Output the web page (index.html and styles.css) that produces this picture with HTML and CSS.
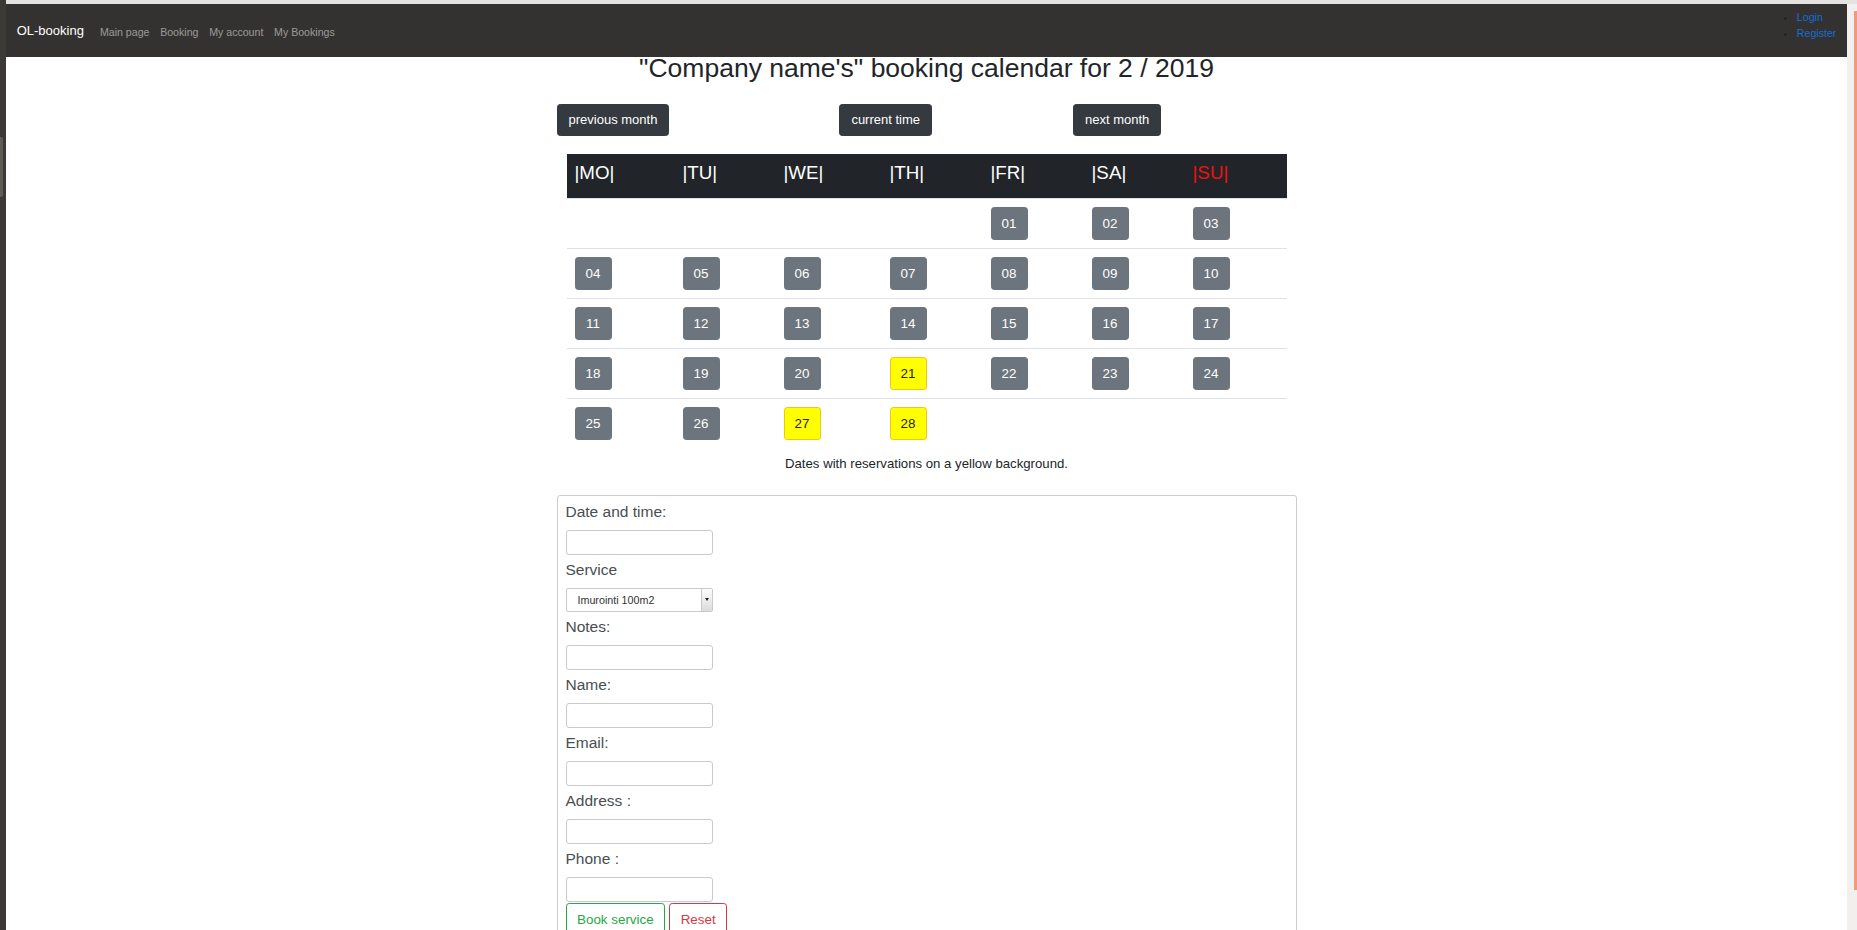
FILE: index.html
```html
<!DOCTYPE html>
<html lang="en">
<head>
<meta charset="utf-8">
<title>OL-booking</title>
<link rel="stylesheet" href="styles.css">
</head>
<body>
<div class="screen">
  <div class="dock"><div class="dock-tab"></div></div>
  <div class="window">
    <div class="topbar"></div>
    <div class="win-body">
      <div class="page">
        <nav class="navbar">
          <a class="brand" href="#">OL-booking</a>
          <ul class="nav-links">
            <li><a class="nav-link" href="#">Main page</a></li>
            <li><a class="nav-link" href="#">Booking</a></li>
            <li><a class="nav-link" href="#">My account</a></li>
            <li><a class="nav-link" href="#">My Bookings</a></li>
          </ul>
          <ul class="auth">
            <li><a href="#">Login</a></li>
            <li><a href="#">Register</a></li>
          </ul>
        </nav>
        <main class="container">
          <h1 class="title">"Company name's" booking calendar for 2 / 2019</h1>
          <div class="month-nav">
            <button class="btn-dark">previous month</button>
            <button class="btn-dark btn-current">current time</button>
            <button class="btn-dark btn-next">next month</button>
          </div>
          <table class="calendar">
            <colgroup>
              <col class="col-wide">
              <col class="col-narrow">
              <col class="col-mid">
              <col class="col-narrow">
              <col class="col-narrow">
              <col class="col-narrow">
              <col class="col-last">
            </colgroup>
            <thead>
              <tr>
                <th><span class="day-name">|MO|</span></th>
                <th><span class="day-name">|TU|</span></th>
                <th><span class="day-name">|WE|</span></th>
                <th><span class="day-name">|TH|</span></th>
                <th><span class="day-name">|FR|</span></th>
                <th><span class="day-name">|SA|</span></th>
                <th><span class="day-name sun">|SU|</span></th>
              </tr>
            </thead>
            <tbody>
              <tr>
                <td></td><td></td><td></td><td></td>
                <td><button class="day">01</button></td>
                <td><button class="day">02</button></td>
                <td><button class="day">03</button></td>
              </tr>
              <tr>
                <td><button class="day">04</button></td>
                <td><button class="day">05</button></td>
                <td><button class="day">06</button></td>
                <td><button class="day">07</button></td>
                <td><button class="day">08</button></td>
                <td><button class="day">09</button></td>
                <td><button class="day">10</button></td>
              </tr>
              <tr>
                <td><button class="day">11</button></td>
                <td><button class="day">12</button></td>
                <td><button class="day">13</button></td>
                <td><button class="day">14</button></td>
                <td><button class="day">15</button></td>
                <td><button class="day">16</button></td>
                <td><button class="day">17</button></td>
              </tr>
              <tr>
                <td><button class="day">18</button></td>
                <td><button class="day">19</button></td>
                <td><button class="day">20</button></td>
                <td><button class="day booked">21</button></td>
                <td><button class="day">22</button></td>
                <td><button class="day">23</button></td>
                <td><button class="day">24</button></td>
              </tr>
              <tr>
                <td><button class="day">25</button></td>
                <td><button class="day">26</button></td>
                <td><button class="day booked">27</button></td>
                <td><button class="day booked">28</button></td>
                <td></td><td></td><td></td>
              </tr>
            </tbody>
          </table>
          <p class="legend">Dates with reservations on a yellow background.</p>
          <form class="booking">
            <label class="field-label">Date and time:</label>
            <input class="field" type="text">
            <label class="field-label">Service</label>
            <div class="select-box">
              <select class="select"><option>Imurointi 100m2</option></select>
              <span class="select-arrow"></span>
            </div>
            <label class="field-label">Notes:</label>
            <input class="field" type="text">
            <label class="field-label">Name:</label>
            <input class="field" type="text">
            <label class="field-label">Email:</label>
            <input class="field" type="text">
            <label class="field-label">Address :</label>
            <input class="field" type="text">
            <label class="field-label">Phone :</label>
            <input class="field" type="text">
            <div class="actions">
              <button type="button" class="btn-outline btn-success-o">Book service</button>
              <button type="reset" class="btn-outline btn-danger-o">Reset</button>
            </div>
          </form>
        </main>
      </div>
      <div class="scrollbar"><div class="thumb"></div></div>
    </div>
  </div>
</div>
</body>
</html>
```

FILE: styles.css
```css
* { box-sizing: border-box; }
html, body { margin: 0; padding: 0; }
body {
  font-family: "Liberation Sans", Arial, sans-serif;
  color: #212529;
  background: #3b3a36;
}
.screen {
  display: flex;
  width: 1857px;
  height: 930px;
  overflow: hidden;
}
.dock {
  width: 6px;
  flex: none;
  background: #3b3a36;
  padding-top: 137px;
}
.dock-tab {
  width: 3px;
  height: 60px;
  background: #5e5c57;
  border-radius: 0 2px 2px 0;
}
.window {
  flex: 1;
  display: flex;
  flex-direction: column;
  min-width: 0;
}
.topbar {
  height: 4px;
  flex: none;
  background: #e4e3e1;
}
.win-body {
  flex: 1;
  display: flex;
  min-height: 0;
}
.page {
  flex: 1;
  min-width: 0;
  background: #fff;
  overflow: hidden;
}
.scrollbar {
  width: 10px;
  flex: none;
  background: #f1f0ef;
  display: flex;
  justify-content: flex-end;
  align-items: flex-start;
  padding-top: 7px;
}
.thumb {
  width: 3px;
  height: 879px;
  background: #ef9a7c;
}

/* navbar */
.navbar {
  height: 53px;
  background: #343230;
  display: flex;
  align-items: center;
  padding: 0 10.7px;
}
.brand {
  color: #fff;
  font-size: 13px;
  margin-right: 10.7px;
  text-decoration: none;
}
.nav-links {
  display: flex;
  list-style: none;
  margin: 0;
  padding: 0;
}
.nav-link {
  color: rgba(255, 255, 255, 0.5);
  font-size: 10.6px;
  padding: 0 5.36px;
  text-decoration: none;
}
.auth {
  margin: 0 0 0 auto;
  align-self: flex-start;
  padding: 5.4px 0 0 20px;
  list-style: disc;
  color: #212529;
  font-size: 10.6px;
  line-height: 16px;
}
.auth a {
  color: #0f6fd6;
  text-decoration: none;
}

/* content */
.container {
  width: 740px;
  margin: 0 auto;
}
.title {
  font-size: 26.5px;
  font-weight: normal;
  line-height: 22px;
  margin: 0;
  text-align: center;
  color: #212529;
}
.month-nav {
  display: flex;
  margin-top: 25px;
}
.btn-dark {
  height: 32px;
  background: #343a40;
  color: #fff;
  border: 1px solid #343a40;
  border-radius: 3.2px;
  font-family: "Liberation Sans", Arial, sans-serif;
  font-size: 13px;
  line-height: 20px;
  padding: 5px 11px;
}
.btn-current { margin-left: 170px; }
.btn-next { margin-left: 141px; }

.calendar {
  width: 720px;
  margin: 18px auto 0;
  border-collapse: collapse;
  table-layout: fixed;
}
.col-wide { width: 108px; }
.col-mid { width: 106px; }
.col-narrow { width: 101px; }
.col-last { width: 102px; }
.calendar th {
  background: #212529;
  color: #fff;
  text-align: left;
  font-weight: normal;
  padding: 8px;
  vertical-align: top;
}
.day-name {
  display: block;
  font-size: 18.76px;
  line-height: 22.5px;
  margin-bottom: 5.5px;
}
.sun { color: #ee1111; }
.calendar td {
  padding: 8px;
  border-top: 1px solid #dee2e6;
  vertical-align: top;
}
.day {
  display: block;
  width: 37px;
  height: 33px;
  padding: 0;
  background: #6c757d;
  border: 1px solid #6c757d;
  border-radius: 3.2px;
  color: #fff;
  font-family: "Liberation Sans", Arial, sans-serif;
  font-size: 13.4px;
  text-align: center;
}
.day.booked {
  background: #ffff00;
  border-color: #f0c419;
  color: #212529;
}
.legend {
  text-align: center;
  font-size: 13.2px;
  line-height: 20px;
  margin: 6px 0 0;
}

/* form */
.booking {
  margin-top: 21px;
  border: 1px solid #cdcdcd;
  border-radius: 3px;
  padding: 1px 8px 40px;
}
.field-label {
  display: block;
  font-size: 15.5px;
  line-height: 23.25px;
  margin: 3.2px 0 6.5px;
  color: #494e53;
}
.field {
  display: block;
  width: 147px;
  height: 25px;
  border: 1px solid #cacaca;
  border-radius: 3px;
  padding: 0 6px;
  font-family: "Liberation Sans", Arial, sans-serif;
  font-size: 10.72px;
  background: #fff;
}
.select-box {
  display: flex;
  width: 147px;
  height: 24px;
  border: 1px solid #cacaca;
  border-radius: 2px;
  overflow: hidden;
}
.select {
  flex: 1;
  min-width: 0;
  appearance: none;
  -webkit-appearance: none;
  border: 0;
  background: transparent;
  font-family: "Liberation Sans", Arial, sans-serif;
  font-size: 10.72px;
  color: #333;
  padding: 0 0 0 11px;
}
.select-arrow {
  width: 11px;
  flex: none;
  border-left: 1px solid #c9c9c9;
  background: linear-gradient(#fdfdfd, #dcdcdc);
  display: flex;
  align-items: center;
  justify-content: center;
}
.select-arrow::after {
  content: "";
  border-left: 2px solid transparent;
  border-right: 2px solid transparent;
  border-top: 3px solid #222;
}
.actions {
  display: flex;
  gap: 4px;
  margin-top: 1.8px;
}
.btn-outline {
  height: 33px;
  background: #fff;
  border: 1px solid;
  border-radius: 3.2px;
  font-family: "Liberation Sans", Arial, sans-serif;
  font-size: 13.4px;
  line-height: 20px;
  padding: 5.36px 10.5px;
}
.btn-success-o { color: #28a745; border-color: #28a745; }
.btn-danger-o { color: #dc3545; border-color: #dc3545; }
```
